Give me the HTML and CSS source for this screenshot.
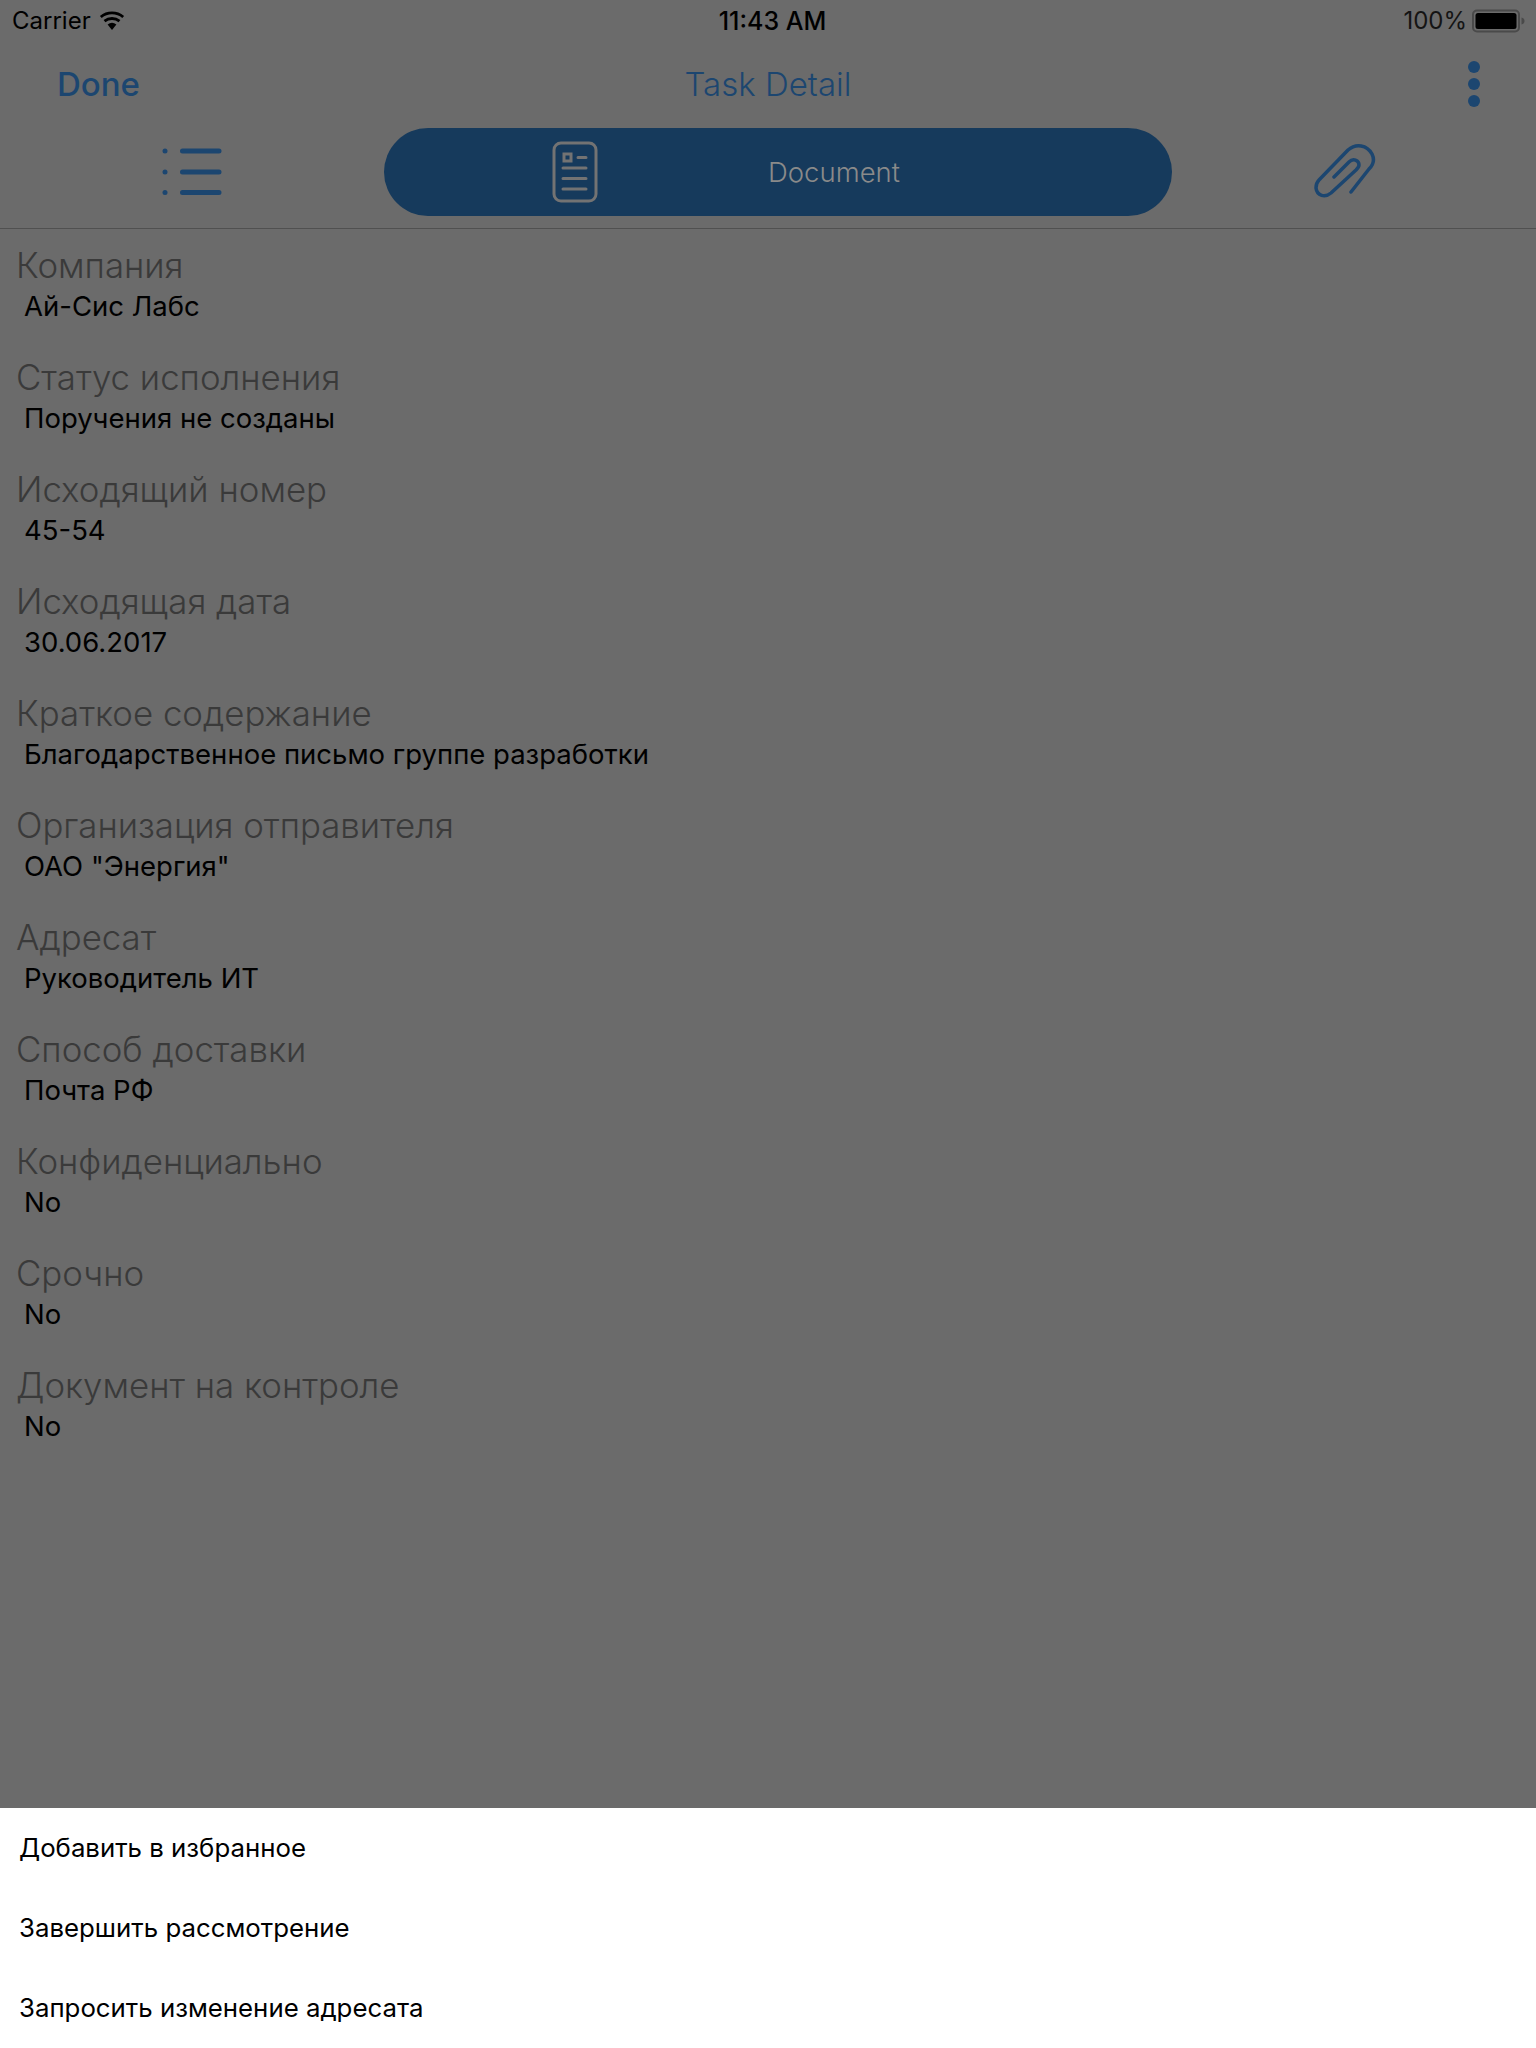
FILE: index.html
```html
<!DOCTYPE html>
<html lang="ru">
<head>
<meta charset="utf-8">
<title>Task Detail</title>
<link rel="stylesheet" href="styles.css">
</head>
<body>
<div class="screen">
  <header class="status">
    <div class="status-left">
      <span>Carrier</span>
      <svg class="wifi" width="26" height="20" viewBox="0 0 26 20"><path d="M13 19 8.6 13.6a7 7 0 0 1 8.800 0Z" fill="#000"/><path d="M5.500 10.200a11.800 11.800 0 0 1 15 0M1.800 6a17.500 17.500 0 0 1 22.400 0" fill="none" stroke="#000" stroke-width="2.800"/></svg>
    </div>
    <div class="status-time">11:43 AM</div>
    <div class="status-right">
      <span>100%</span>
      <svg class="battery" width="54" height="24" viewBox="0 0 54 24"><rect x="1" y="1.500" width="46" height="21" rx="4" fill="none" stroke="#4a4a4a" stroke-width="2"/><rect x="3.500" y="4" width="41" height="16" rx="2.500" fill="#000"/><path d="M49.500 8.500c2 .5 3 1.800 3 3.500s-1 3-3 3.500Z" fill="#4a4a4a"/></svg>
    </div>
  </header>

  <nav class="nav">
    <div class="nav-done">Done</div>
    <div class="nav-title">Task Detail</div>
    <div class="nav-more"><i></i><i></i><i></i></div>
  </nav>

  <div class="tabs">
    <div class="tab-side tab-list">
      <svg width="62" height="48" viewBox="0 0 62 48"><g fill="#1c4670"><circle cx="4" cy="3" r="2.500"/><circle cx="4" cy="24" r="2.500"/><circle cx="4" cy="44.500" r="2.500"/></g><g stroke="#1c4670" stroke-width="5" stroke-linecap="round"><path d="M21.500 3H58M21.500 24H58M21.500 44.500H58"/></g></svg>
    </div>
    <div class="tab-pill">
      <svg class="doc" width="46" height="62" viewBox="0 0 46 62"><g fill="none" stroke="#737373" stroke-width="3"><rect x="2" y="2" width="42" height="58" rx="7"/><rect x="12" y="13" width="7" height="7"/></g><path d="M26 16.500h8M11 27h23M11 37.500h23M11 48h23" stroke="#737373" stroke-width="3" stroke-linecap="round" fill="none"/></svg>
      <span class="tab-label">Document</span>
    </div>
    <div class="tab-side tab-clip">
      <svg width="66" height="60" viewBox="10 12 66 60"><path d="M33 47 48 32C52 28 58 30 58 35 58 37 57 38 55 40L30 63C24 68 16 66 15 58 15 55 16 52 18 50L47 20C55 13 66 15 71 24 74 30 72 35 68 39L50 62" fill="none" stroke="#1c4670" stroke-width="3.500" stroke-linecap="round" stroke-linejoin="round"/></svg>
    </div>
  </div>

  <main class="fields">
    <section class="field"><h2>Компания</h2><p>Ай-Сис Лабс</p></section>
    <section class="field"><h2>Статус исполнения</h2><p>Поручения не созданы</p></section>
    <section class="field"><h2>Исходящий номер</h2><p>45-54</p></section>
    <section class="field"><h2>Исходящая дата</h2><p>30.06.2017</p></section>
    <section class="field"><h2>Краткое содержание</h2><p>Благодарственное письмо группе разработки</p></section>
    <section class="field"><h2>Организация отправителя</h2><p>ОАО "Энергия"</p></section>
    <section class="field"><h2>Адресат</h2><p>Руководитель ИТ</p></section>
    <section class="field"><h2>Способ доставки</h2><p>Почта РФ</p></section>
    <section class="field"><h2>Конфиденциально</h2><p>No</p></section>
    <section class="field"><h2>Срочно</h2><p>No</p></section>
    <section class="field"><h2>Документ на контроле</h2><p>No</p></section>
  </main>

  <ul class="sheet">
    <li>Добавить в избранное</li>
    <li>Завершить рассмотрение</li>
    <li>Запросить изменение адресата</li>
  </ul>
</div>
</body>
</html>
```

FILE: styles.css
```css
* { box-sizing: border-box; }
html, body { margin: 0; padding: 0; }
body { background: #6b6b6b; font-family: Inter, "Liberation Sans", sans-serif; color: #000; }
.screen { width: 1536px; height: 2048px; display: flex; flex-direction: column; overflow: hidden; background: #6b6b6b; }

.status { height: 40px; flex: none; display: grid; grid-template-columns: 1fr auto 1fr; align-items: center; padding: 1px 10px 0 12px; font-size: 24px; line-height: 40px; }
.status-left { display: flex; align-items: center; gap: 8px; }
.status-time { font-size: 25px; font-weight: 500; margin-left: 7px; }
.status-right { display: flex; align-items: center; justify-content: flex-end; gap: 5px; color: #141414; }

.nav { height: 88px; flex: none; position: relative; display: flex; align-items: center; justify-content: space-between; padding: 0 56px 0 57px; color: #1c4670; font-size: 33px; }
.nav-done { font-weight: 500; }
.nav-title { position: absolute; left: 0; right: 0; text-align: center; font-weight: 300; }
.nav-more { display: flex; flex-direction: column; gap: 5px; margin-top: -1px; }
.nav-more i { display: block; width: 12px; height: 12px; border-radius: 50%; background: #1c4670; }

.tabs { height: 101px; flex: none; display: flex; align-items: flex-start; border-bottom: 1px solid #505050; position: relative; }
.tab-side { display: flex; justify-content: center; }
.tab-list { width: 384px; padding: 20px 0 0 0; }
.tab-clip { flex: 1; padding: 14px 20px 0 0; }
.tab-pill { width: 788px; height: 88px; border-radius: 44px; background: #163a5c; display: flex; align-items: center; padding-left: 168px; }
.tab-label { flex: 1; text-align: center; padding-right: 102px; color: #8a8a8a; font-size: 27.500px; font-weight: 300; }

.fields { flex: 1; padding-top: 15px; }
.field { height: 112px; padding: 0 0 0 16px; }
.field h2 { margin: 0; height: 43px; font-size: 34.800px; line-height: 43px; font-weight: 300; color: #3a3a3a; }
.field p { margin: 0; padding-left: 8px; font-size: 27.500px; line-height: 38px; color: #000; }

.sheet { list-style: none; margin: 0; padding: 0; flex: none; height: 240px; background: #fff; }
.sheet li { height: 80px; padding-left: 19px; font-size: 25.800px; line-height: 80px; color: #000; }
```
